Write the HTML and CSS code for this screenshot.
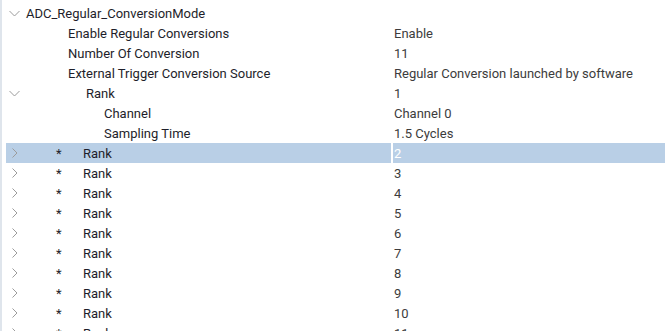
FILE: index.html
```html
<!DOCTYPE html>
<html>
<head>
<meta charset="utf-8">
<link rel="stylesheet" href="styles.css">
</head>
<body>
<div class="tree">
  <div class="row">
    <div class="name"><span class="tw"><svg width="16" height="20" viewBox="0 0 16 20"><polyline points="3.5,8 8.5,13 13.5,8" class="chev"/></svg></span><span class="lbl l0">ADC_Regular_ConversionMode</span></div>
    <div class="val"></div>
  </div>
  <div class="row">
    <div class="name"><span class="tw"></span><span class="lbl l1">Enable Regular Conversions</span></div>
    <div class="val">Enable</div>
  </div>
  <div class="row">
    <div class="name"><span class="tw"></span><span class="lbl l1">Number Of Conversion</span></div>
    <div class="val">11</div>
  </div>
  <div class="row">
    <div class="name"><span class="tw"></span><span class="lbl l1">External Trigger Conversion Source</span></div>
    <div class="val">Regular Conversion launched by software</div>
  </div>
  <div class="row">
    <div class="name"><span class="tw"><svg width="16" height="20" viewBox="0 0 16 20"><polyline points="3.5,8 8.5,13 13.5,8" class="chev"/></svg></span><span class="lbl l2">Rank</span></div>
    <div class="val">1</div>
  </div>
  <div class="row">
    <div class="name"><span class="tw"></span><span class="lbl l3">Channel</span></div>
    <div class="val">Channel 0</div>
  </div>
  <div class="row">
    <div class="name"><span class="tw"></span><span class="lbl l3">Sampling Time</span></div>
    <div class="val">1.5 Cycles</div>
  </div>
  <div class="row sel">
    <div class="name"><span class="tw"><svg width="16" height="20" viewBox="0 0 16 20"><polyline points="6.5,5.5 11,10 6.5,14.5" class="chev"/></svg></span><span class="star">*</span><span class="lbl">Rank</span></div>
    <div class="val">2</div>
  </div>
  <div class="row">
    <div class="name"><span class="tw"><svg width="16" height="20" viewBox="0 0 16 20"><polyline points="6.5,5.5 11,10 6.5,14.5" class="chev"/></svg></span><span class="star">*</span><span class="lbl">Rank</span></div>
    <div class="val">3</div>
  </div>
  <div class="row">
    <div class="name"><span class="tw"><svg width="16" height="20" viewBox="0 0 16 20"><polyline points="6.5,5.5 11,10 6.5,14.5" class="chev"/></svg></span><span class="star">*</span><span class="lbl">Rank</span></div>
    <div class="val">4</div>
  </div>
  <div class="row">
    <div class="name"><span class="tw"><svg width="16" height="20" viewBox="0 0 16 20"><polyline points="6.5,5.5 11,10 6.5,14.5" class="chev"/></svg></span><span class="star">*</span><span class="lbl">Rank</span></div>
    <div class="val">5</div>
  </div>
  <div class="row">
    <div class="name"><span class="tw"><svg width="16" height="20" viewBox="0 0 16 20"><polyline points="6.5,5.5 11,10 6.5,14.5" class="chev"/></svg></span><span class="star">*</span><span class="lbl">Rank</span></div>
    <div class="val">6</div>
  </div>
  <div class="row">
    <div class="name"><span class="tw"><svg width="16" height="20" viewBox="0 0 16 20"><polyline points="6.5,5.5 11,10 6.5,14.5" class="chev"/></svg></span><span class="star">*</span><span class="lbl">Rank</span></div>
    <div class="val">7</div>
  </div>
  <div class="row">
    <div class="name"><span class="tw"><svg width="16" height="20" viewBox="0 0 16 20"><polyline points="6.5,5.5 11,10 6.5,14.5" class="chev"/></svg></span><span class="star">*</span><span class="lbl">Rank</span></div>
    <div class="val">8</div>
  </div>
  <div class="row">
    <div class="name"><span class="tw"><svg width="16" height="20" viewBox="0 0 16 20"><polyline points="6.5,5.5 11,10 6.5,14.5" class="chev"/></svg></span><span class="star">*</span><span class="lbl">Rank</span></div>
    <div class="val">9</div>
  </div>
  <div class="row">
    <div class="name"><span class="tw"><svg width="16" height="20" viewBox="0 0 16 20"><polyline points="6.5,5.5 11,10 6.5,14.5" class="chev"/></svg></span><span class="star">*</span><span class="lbl">Rank</span></div>
    <div class="val">10</div>
  </div>
  <div class="row">
    <div class="name"><span class="tw"><svg width="16" height="20" viewBox="0 0 16 20"><polyline points="6.5,5.5 11,10 6.5,14.5" class="chev"/></svg></span><span class="star">*</span><span class="lbl">Rank</span></div>
    <div class="val">11</div>
  </div>
</div>
</body>
</html>
```
FILE: styles.css
```css
html, body {
  margin: 0;
  padding: 0;
  background: #ffffff;
  overflow: hidden;
}
body {
  width: 665px;
  height: 331px;
  font-family: Roboto, "Liberation Sans", Arial, sans-serif;
  font-size: 13px;
  color: #1e1e2a;
}
.tree {
  border-left: 2px solid #dfe5ec;
  height: 331px;
  box-sizing: border-box;
  padding-top: 3px;
  padding-left: 4px;
}
.row {
  display: flex;
  height: 20px;
  align-items: center;
  white-space: nowrap;
}
.row.sel {
  background: #b9cfe6;
}
.name {
  width: 385px;
  flex: none;
  display: flex;
  align-items: center;
  height: 100%;
  border-right: 2px solid transparent;
}
.row.sel .name {
  border-right-color: #ffffff;
}
.val {
  padding-left: 1px;
  color: #3c3c3c;
  flex: 1;
}
.row.sel .val {
  color: #ffffff;
}
.tw {
  width: 16px;
  height: 20px;
  flex: none;
}
.tw svg {
  display: block;
}
.chev {
  fill: none;
  stroke: #9c9c9c;
  stroke-width: 1;
}
.lbl.l0 { margin-left: 4px; }
.lbl.l1 { margin-left: 46px; }
.lbl.l2 { margin-left: 64px; }
.lbl.l3 { margin-left: 82px; }
.star {
  margin-left: 34px;
  width: 27px;
  flex: none;
}
```
